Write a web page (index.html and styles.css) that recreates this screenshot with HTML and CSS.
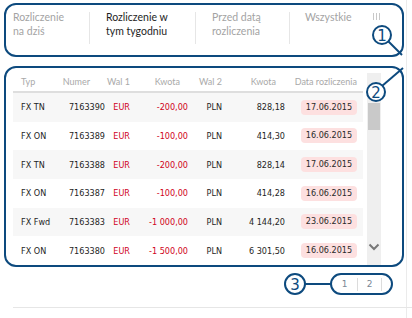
FILE: index.html
```html
<!DOCTYPE html>
<html lang="pl">
<head>
    <meta charset="UTF-8">
    <meta name="viewport" content="width=device-width, initial-scale=1.0">
    <title>Rozliczenia</title>
    <link rel="stylesheet" href="styles.css">
</head>
<body>
    <div class="page">
        <div class="tabs-box">
            <div class="tab tab1"><span>Rozliczenie<br>na dziś</span></div>
            <div class="tab tab2 active"><span>Rozliczenie w<br>tym tygodniu</span></div>
            <div class="tab tab3"><span>Przed datą<br>rozliczenia</span></div>
            <div class="tab tab4"><span>Wszystkie</span></div>
            <div class="grip"><i></i><i></i><i></i></div>
        </div>

        <div class="table-box">
            <div class="grid">
                <div class="row head">
                    <div class="c-typ">Typ</div>
                    <div class="c-num">Numer</div>
                    <div class="c-wal">Wal 1</div>
                    <div class="c-kw1">Kwota</div>
                    <div class="c-wal">Wal 2</div>
                    <div class="c-kw2">Kwota</div>
                    <div class="c-date">Data rozliczenia</div>
                </div>
                <div class="row odd">
                    <div class="c-typ">FX TN</div>
                    <div class="c-num">7163390</div>
                    <div class="c-wal red">EUR</div>
                    <div class="c-kw1 red">-200,00</div>
                    <div class="c-wal">PLN</div>
                    <div class="c-kw2">828,18</div>
                    <div class="c-date"><span class="badge">17.06.2015</span></div>
                </div>
                <div class="row">
                    <div class="c-typ">FX ON</div>
                    <div class="c-num">7163389</div>
                    <div class="c-wal red">EUR</div>
                    <div class="c-kw1 red">-100,00</div>
                    <div class="c-wal">PLN</div>
                    <div class="c-kw2">414,30</div>
                    <div class="c-date"><span class="badge">16.06.2015</span></div>
                </div>
                <div class="row odd">
                    <div class="c-typ">FX TN</div>
                    <div class="c-num">7163388</div>
                    <div class="c-wal red">EUR</div>
                    <div class="c-kw1 red">-200,00</div>
                    <div class="c-wal">PLN</div>
                    <div class="c-kw2">828,14</div>
                    <div class="c-date"><span class="badge">17.06.2015</span></div>
                </div>
                <div class="row">
                    <div class="c-typ">FX ON</div>
                    <div class="c-num">7163387</div>
                    <div class="c-wal red">EUR</div>
                    <div class="c-kw1 red">-100,00</div>
                    <div class="c-wal">PLN</div>
                    <div class="c-kw2">414,28</div>
                    <div class="c-date"><span class="badge">16.06.2015</span></div>
                </div>
                <div class="row odd">
                    <div class="c-typ">FX Fwd</div>
                    <div class="c-num">7163383</div>
                    <div class="c-wal red">EUR</div>
                    <div class="c-kw1 red">-1 000,00</div>
                    <div class="c-wal">PLN</div>
                    <div class="c-kw2">4 144,20</div>
                    <div class="c-date"><span class="badge">23.06.2015</span></div>
                </div>
                <div class="row">
                    <div class="c-typ">FX ON</div>
                    <div class="c-num">7163380</div>
                    <div class="c-wal red">EUR</div>
                    <div class="c-kw1 red">-1 500,00</div>
                    <div class="c-wal">PLN</div>
                    <div class="c-kw2">6 301,50</div>
                    <div class="c-date"><span class="badge">16.06.2015</span></div>
                </div>
            </div>
            <div class="scrollbar">
                <div class="thumb"></div>
                <svg class="chevron" width="12" height="8" viewBox="0 0 12 8">
                    <path d="M1.5 1.5 L6 6 L10.5 1.5" fill="none" stroke="#777" stroke-width="2"/>
                </svg>
            </div>
        </div>

        <div class="pager-row">
            <div class="pager">
                <span class="pg">1</span>
                <span class="pg pg2">2</span>
            </div>
        </div>
        <div class="divider"></div>

        <!-- annotation marks -->
        <svg class="notes" width="412" height="318" viewBox="0 0 412 318">
            <g fill="#fff" stroke="#0d4a7e" stroke-width="2">
                <line x1="388" y1="41" x2="402" y2="55"/>
                <circle cx="382" cy="35" r="9"/>
                <line x1="382" y1="86" x2="403" y2="68"/>
                <circle cx="376" cy="92" r="9"/>
                <line x1="305" y1="284" x2="331" y2="284"/>
                <circle cx="295" cy="284" r="10"/>
            </g>
            <g fill="#0d4a7e" font-family="DejaVu Sans, sans-serif" font-size="15" text-anchor="middle">
                <text x="382" y="40.5">1</text>
                <text x="376" y="97.5">2</text>
                <text x="295" y="289.5">3</text>
            </g>
        </svg>
    </div>
</body>
</html>
```

FILE: styles.css
```css
* {
    margin: 0;
    padding: 0;
    box-sizing: border-box;
}

body {
    width: 412px;
    height: 318px;
    background: #fff;
    font-family: "DejaVu Sans Condensed", "DejaVu Sans", sans-serif;
    color: #1e1e1e;
    overflow: hidden;
}

.page {
    position: relative;
    width: 407px;
    height: 318px;
    padding: 3px 2px 0 4px;
    border-right: 1px solid #ebebeb;
}

/* tabs */
.tabs-box {
    display: flex;
    align-items: flex-start;
    height: 54px;
    border: 2px solid #0d4a7e;
    border-radius: 12px;
    font-family: Lato, "Noto Sans", sans-serif;
    font-size: 10.5px;
    line-height: 14px;
    color: #a3a3a3;
}

.tab {
    margin-top: 7px;
    height: 32px;
    border-right: 1px solid #e6e6e6;
}
.tab span {
    display: block;
    margin-top: -2px;
}
.tab.active {
    color: #1e1e1e;
}
.tab1 { width: 84px; padding-left: 7px; }
.tab2 { width: 106px; padding-left: 16px; }
.tab3 { width: 94px; padding-left: 16px; }
.tab4 { width: 83px; padding-left: 15px; border-right: 0; }

.grip {
    display: flex;
    gap: 2px;
    margin-top: 8px;
}
.grip i {
    width: 1px;
    height: 7px;
    background: #c8c8c8;
}

/* table */
.table-box {
    display: flex;
    height: 201px;
    margin-top: 9px;
    padding: 4px 0 0 7px;
    border: 2px solid #0d4a7e;
    border-radius: 12px;
    overflow: hidden;
}

.grid {
    width: 350px;
    font-size: 9px;
}

.row {
    display: grid;
    grid-template-columns: 47px 45px 25px 58px 34px 63px 72px;
    padding-right: 6px;
    align-items: center;
    height: 28.67px;
    white-space: nowrap;
}
.row.odd {
    background: #f7f7f7;
}
.row.head {
    height: 21px;
    border-bottom: 2px solid #dedede;
    font-family: Lato, "Noto Sans", sans-serif;
    font-size: 9px;
    color: #a9a9a9;
}

.c-typ { padding-left: 8px; }
.c-num, .c-wal, .c-kw1, .c-kw2, .c-date { text-align: right; }
.head .c-num { padding-right: 15px; }
.head .c-kw1 { padding-right: 8px; }
.head .c-kw2 { padding-right: 9px; }

.red {
    color: #d0021b;
}

.badge {
    display: inline-block;
    width: 56px;
    height: 15px;
    line-height: 15px;
    border-radius: 4px;
    background: #fde0e0;
    color: #2a2a2a;
    text-align: center;
}

.scrollbar {
    display: flex;
    flex-direction: column;
    align-items: center;
    width: 14px;
    margin: 1px 0 0 4px;
    background: #efefef;
}
.thumb {
    width: 12px;
    height: 27px;
    margin-top: 30px;
    background: #c9c9c9;
}
.chevron {
    margin-top: auto;
    margin-bottom: 14px;
}

/* pager */
.pager-row {
    display: flex;
    justify-content: flex-end;
    margin-top: 6px;
    padding-right: 11px;
}
.pager {
    display: flex;
    align-items: center;
    width: 63px;
    height: 22px;
    padding-right: 9px;
    border: 2px solid #0d4a7e;
    border-radius: 11px;
    font-family: "DejaVu Sans", sans-serif;
    font-size: 9px;
}
.pg {
    width: 26px;
    height: 13px;
    line-height: 13px;
    text-align: center;
    color: #7a8896;
    border-right: 1px solid #dcdcdc;
}
.pg2 {
    width: 24px;
}

.divider {
    height: 1px;
    margin: 12px -8px 0 9px;
    background: #e6e6e6;
}

.notes {
    position: absolute;
    left: 0;
    top: 0;
    pointer-events: none;
}
```
